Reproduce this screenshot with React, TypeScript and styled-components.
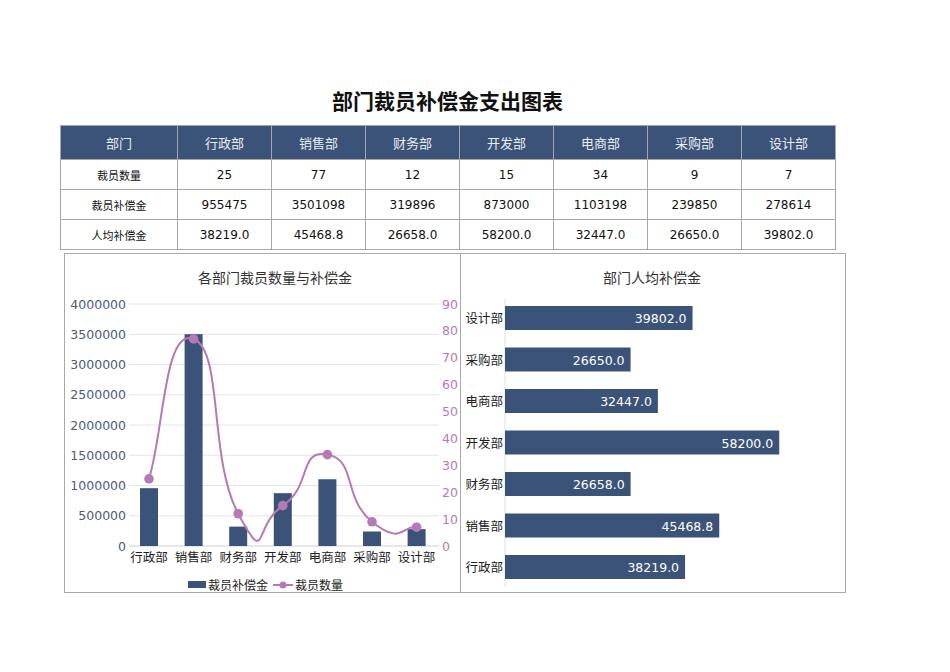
import React from "react";
import styled, { createGlobalStyle } from "styled-components";

const GlobalStyle = createGlobalStyle`
  body { margin: 0; background: #fff; font-family: "DejaVu Sans", "Noto Sans CJK SC", sans-serif; }
`;

const depts = ["行政部", "销售部", "财务部", "开发部", "电商部", "采购部", "设计部"];
const counts = [25, 77, 12, 15, 34, 9, 7];
const comps = [955475, 3501098, 319896, 873000, 1103198, 239850, 278614];
const avgs = ["38219.0", "45468.8", "26658.0", "58200.0", "32447.0", "26650.0", "39802.0"];

const NAVY = "#3b5378";
const PURPLE = "#b57ab5";

const Page = styled.div`
  width: 950px;
  height: 672px;
  padding: 88px 0 0 60px;
  box-sizing: border-box;
`;

const Title = styled.h1`
  margin: 0 0 9px;
  width: 775px;
  text-align: center;
  font-size: 21px;
  font-weight: bold;
  color: #111;
  line-height: 28px;
`;

const Table = styled.table`
  border-collapse: collapse;
  width: 776px;
  table-layout: fixed;
  font-size: 12px;
`;

const Th = styled.th<{ $first?: boolean }>`
  background: ${NAVY};
  color: #e8ecf3;
  font-weight: normal;
  height: 31px;
  border: 1px solid #a7a7a7;
  width: ${(p) => (p.$first ? "114px" : "auto")};
  font-size: 13px;
`;

const Td = styled.td<{ $label?: boolean }>`
  height: 27px;
  border: 1px solid #a7a7a7;
  text-align: center;
  color: #111;
  font-size: ${(p) => (p.$label ? "11px" : "12px")};
  font-family: ${(p) => (p.$label ? '"Noto Sans CJK SC", serif' : '"DejaVu Sans", sans-serif')};
`;

const Charts = styled.div`
  display: flex;
  margin: 3px 0 0 4px;
`;

const Panel = styled.div<{ $w: number }>`
  width: ${(p) => p.$w}px;
  height: 340px;
  border: 1px solid #a9a9a9;
  box-sizing: border-box;
  margin-right: -3px;
  background: #fff;
`;

const LeftChart = () => {
  // panel origin at (64,243)
  const ox = 64, oy = 243;
  const y0 = 535 - oy, yTop = 293 - oy;
  const yOf = (v: number) => y0 - (v / 4000000) * (y0 - yTop);
  const yR = (v: number) => y0 - (v / 90) * (y0 - yTop);
  const cx = (i: number) => 148 + i * 44.6 - ox;
  const pts = counts.map((c, i) => [cx(i), yR(c)]);
  let d = `M${pts[0][0]},${pts[0][1]}`;
  for (let i = 0; i < pts.length - 1; i++) {
    const p0 = pts[i - 1] || pts[i], p1 = pts[i], p2 = pts[i + 1], p3 = pts[i + 2] || p2;
    const t = 0.5 / 1.5;
    const c1 = [p1[0] + (p2[0] - p0[0]) * t / 1, p1[1] + (p2[1] - p0[1]) * t];
    const c2 = [p2[0] - (p3[0] - p1[0]) * t, p2[1] - (p3[1] - p1[1]) * t];
    d += ` C${c1[0]},${c1[1]} ${c2[0]},${c2[1]} ${p2[0]},${p2[1]}`;
  }
  return (
    <svg width="396" height="338" fontFamily='"DejaVu Sans", "Noto Sans CJK SC", sans-serif'>
      <text x="210" y="29" textAnchor="middle" fontSize="14" fill="#333">各部门裁员数量与补偿金</text>
      {Array.from({ length: 9 }, (_, k) => {
        const v = k * 500000;
        const y = yOf(v);
        return (
          <g key={k}>
            <line x1={128 - ox} x2={438 - ox} y1={y} y2={y} stroke={k === 0 ? "#d0d0d0" : "#e6e6e6"} />
            <text x={125 - ox} y={y + 4.5} textAnchor="end" fontSize="12.5" fill="#4a5c7a">{v}</text>
          </g>
        );
      })}
      {Array.from({ length: 10 }, (_, k) => (
        <text key={k} x={441 - ox} y={yR(k * 10) + 4.5} fontSize="12.5" fill={PURPLE}>{k * 10}</text>
      ))}
      {comps.map((c, i) => (
        <rect key={i} x={cx(i) - 9} y={yOf(c)} width="18" height={y0 - yOf(c)} fill={NAVY} />
      ))}
      <path d={d} fill="none" stroke={PURPLE} strokeWidth="2" />
      {pts.map((p, i) => (
        <circle key={i} cx={p[0]} cy={p[1]} r="4.8" fill={PURPLE} />
      ))}
      {depts.map((n, i) => (
        <text key={n} x={cx(i)} y={551 - oy} textAnchor="middle" fontSize="12.5" fill="#222">{n}</text>
      ))}
      <rect x={187 - ox} y={570 - oy} width="18" height="7" fill={NAVY} />
      <text x={207 - ox} y={579 - oy} fontSize="12" fill="#222">裁员补偿金</text>
      <line x1={272 - ox} x2={292 - ox} y1={574 - oy} y2={574 - oy} stroke={PURPLE} strokeWidth="2" />
      <circle cx={282 - ox} cy={574 - oy} r="3.5" fill={PURPLE} />
      <text x={294 - ox} y={579 - oy} fontSize="12" fill="#222">裁员数量</text>
    </svg>
  );
};

const RightChart = () => {
  const ox = 460, oy = 243;
  const rows = [...depts].reverse();
  const vals = [...avgs].reverse();
  return (
    <svg width="382" height="338" fontFamily='"DejaVu Sans", "Noto Sans CJK SC", sans-serif'>
      <text x={651 - ox} y="29" textAnchor="middle" fontSize="14" fill="#333">部门人均补偿金</text>
      <line x1={504 - ox} x2={504 - ox} y1={288 - oy} y2={576 - oy} stroke="#e0e0e0" />
      {rows.map((n, i) => {
        const cy = 307 + i * 41.5 - oy;
        const w = parseFloat(vals[i]) * 0.004712;
        return (
          <g key={n}>
            <text x={502 - ox} y={cy + 5} textAnchor="end" fontSize="12.5" fill="#222">{n}</text>
            <rect x={504 - ox} y={cy - 12} width={w} height="24" fill={NAVY} />
            <text x={504 - ox + w - 6} y={cy + 5} textAnchor="end" fontSize="12.5" fill="#fff">{vals[i]}</text>
          </g>
        );
      })}
    </svg>
  );
};

export default function App() {
  return (
    <Page>
      <GlobalStyle />
      <Title>部门裁员补偿金支出图表</Title>
      <Table>
        <thead>
          <tr>
            <Th $first>部门</Th>
            {depts.map((d) => <Th key={d}>{d}</Th>)}
          </tr>
        </thead>
        <tbody>
          <tr>
            <Td $label>裁员数量</Td>
            {counts.map((c, i) => <Td key={i}>{c}</Td>)}
          </tr>
          <tr>
            <Td $label>裁员补偿金</Td>
            {comps.map((c, i) => <Td key={i}>{c}</Td>)}
          </tr>
          <tr>
            <Td $label>人均补偿金</Td>
            {avgs.map((c, i) => <Td key={i}>{c}</Td>)}
          </tr>
        </tbody>
      </Table>
      <Charts>
        <Panel $w={399}><LeftChart /></Panel>
        <Panel $w={386}><RightChart /></Panel>
      </Charts>
    </Page>
  );
}
